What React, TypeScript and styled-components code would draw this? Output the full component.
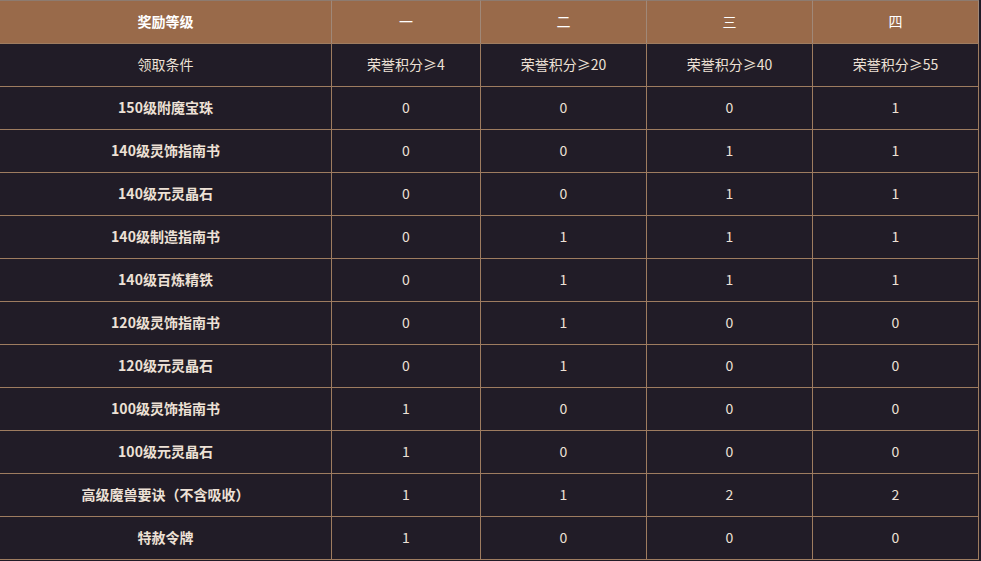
import React from "react";
import styled, { createGlobalStyle } from "styled-components";

const GlobalStyle = createGlobalStyle`
  html, body {
    margin: 0;
    padding: 0;
    background: #211c27;
  }
  body {
    font-family: "Microsoft YaHei", "Noto Sans CJK SC", "Noto Sans", sans-serif;
  }
`;

const Table = styled.div`
  display: grid;
  grid-template-columns: 332px 149px 166px 166px 166px;
  width: 979px;
  border-bottom: 1px solid #9e7c60;
`;

const Cell = styled.div<{ $head?: boolean; $bold?: boolean }>`
  height: 40px;
  padding-bottom: 2px;
  display: flex;
  align-items: center;
  justify-content: center;
  box-sizing: content-box;
  border-top: 1px solid ${(p) => (p.$head ? "#8d7b70" : "#9e7c60")};
  border-right: 1px solid ${(p) => (p.$head ? "#a08878" : "#9e7c60")};
  background: ${(p) => (p.$head ? "#996a4a" : "#211c27")};
  color: ${(p) => (p.$head ? "#ffffff" : "#ede1d6")};
  font-size: 14px;
  font-weight: ${(p) => (p.$bold ? 700 : 400)};
  white-space: nowrap;
`;

const levels = ["一", "二", "三", "四"];
const conditions = ["荣誉积分≥4", "荣誉积分≥20", "荣誉积分≥40", "荣誉积分≥55"];

const rewards: { name: string; counts: number[] }[] = [
  { name: "150级附魔宝珠", counts: [0, 0, 0, 1] },
  { name: "140级灵饰指南书", counts: [0, 0, 1, 1] },
  { name: "140级元灵晶石", counts: [0, 0, 1, 1] },
  { name: "140级制造指南书", counts: [0, 1, 1, 1] },
  { name: "140级百炼精铁", counts: [0, 1, 1, 1] },
  { name: "120级灵饰指南书", counts: [0, 1, 0, 0] },
  { name: "120级元灵晶石", counts: [0, 1, 0, 0] },
  { name: "100级灵饰指南书", counts: [1, 0, 0, 0] },
  { name: "100级元灵晶石", counts: [1, 0, 0, 0] },
  { name: "高级魔兽要诀（不含吸收）", counts: [1, 1, 2, 2] },
  { name: "特赦令牌", counts: [1, 0, 0, 0] },
];

export default function App() {
  return (
    <>
      <GlobalStyle />
      <Table>
        <Cell $head $bold>奖励等级</Cell>
        {levels.map((l) => (
          <Cell key={l} $head>{l}</Cell>
        ))}

        <Cell>领取条件</Cell>
        {conditions.map((c) => (
          <Cell key={c}>{c}</Cell>
        ))}

        {rewards.map((r) => (
          <React.Fragment key={r.name}>
            <Cell $bold>{r.name}</Cell>
            {r.counts.map((n, i) => (
              <Cell key={i}>{n}</Cell>
            ))}
          </React.Fragment>
        ))}
      </Table>
    </>
  );
}
